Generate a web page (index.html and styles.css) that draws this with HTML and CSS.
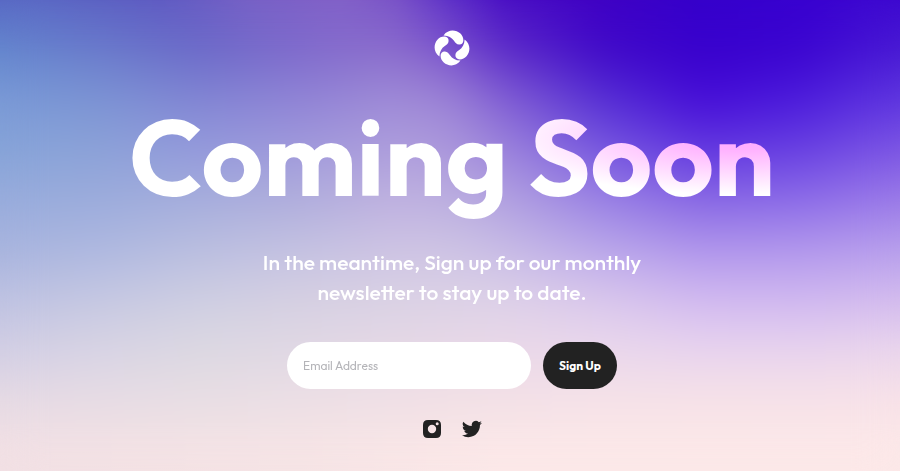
FILE: index.html
```html
<!DOCTYPE html>
<html lang="en">
<head>
<meta charset="utf-8">
<meta name="viewport" content="width=device-width, initial-scale=1">
<title>Coming Soon</title>
<link rel="stylesheet" href="styles.css">
</head>
<body>
<div class="mesh" aria-hidden="true">
  <div class="band band-0"></div>
  <div class="band band-1"></div>
  <div class="band band-2"></div>
  <div class="band band-3"></div>
  <div class="band band-4"></div>
  <div class="band band-5"></div>
  <div class="band band-6"></div>
  <div class="band band-7"></div>
  <div class="band band-8"></div>
  <div class="band band-9"></div>
</div>
<main class="page">
  <a class="logo" href="#" aria-label="Home">
    <svg viewBox="0 0 36 36" width="36" height="36" fill="currentColor">
      <path id="petal" d="M9.500 5.400C12 2 15.500 .600 18.500 .600C24.500 .600 29.400 5 29.400 10.200C29.400 13 27.600 14.800 25.100 14.600C22.400 14.400 21.400 12.800 20 10.800C17.800 7.600 14.600 5.600 9.500 5.400Z"/>
      <use href="#petal" transform="rotate(90 18 18)"/>
      <use href="#petal" transform="rotate(180 18 18)"/>
      <use href="#petal" transform="rotate(270 18 18)"/>
    </svg>
  </a>
  <h1 class="title">Coming Soon</h1>
  <p class="lead">In the meantime, Sign up for our monthly newsletter to stay up to date.</p>
  <form class="signup">
    <input class="email" type="email" placeholder="Email Address" aria-label="Email Address">
    <button class="submit" type="submit">Sign Up</button>
  </form>
  <nav class="social">
    <a href="#" aria-label="Instagram">
      <svg viewBox="0 0 20 20" width="20" height="20" fill="currentColor"><path fill-rule="evenodd" d="M6 1H14Q19 1 19 6V14Q19 19 14 19H6Q1 19 1 14V6Q1 1 6 1ZM10 5.800A4.200 4.200 0 1 0 10 14.200A4.200 4.200 0 1 0 10 5.800ZM15.200 3.300A1.500 1.500 0 1 0 15.200 6.300A1.500 1.500 0 1 0 15.200 3.300Z"/></svg>
    </a>
    <a href="#" aria-label="Twitter">
      <svg viewBox="0 0 24 24" width="20" height="20" fill="currentColor"><path d="M23.950 4.570a10 10 0 0 1-2.820.770 4.960 4.960 0 0 0 2.160-2.720c-.950.560-2 .960-3.130 1.180a4.920 4.920 0 0 0-8.380 4.480C7.690 8.090 4.070 6.130 1.640 3.160a4.920 4.920 0 0 0 1.520 6.570 4.900 4.900 0 0 1-2.230-.620v.060a4.920 4.920 0 0 0 3.950 4.830 5 5 0 0 1-2.210.080 4.940 4.940 0 0 0 4.600 3.420A9.870 9.870 0 0 1 0 19.540a13.990 13.990 0 0 0 7.560 2.210c9.050 0 14-7.500 14-13.980 0-.210 0-.420-.020-.630a9.940 9.940 0 0 0 2.410-2.570z"/></svg>
    </a>
  </nav>
</main>
</body>
</html>
```
FILE: styles.css
```css
* {
  box-sizing: border-box;
}

body {
  margin: 0;
  position: relative;
  font-family: Outfit, Lato, sans-serif;
  background: #fce8e8;
  color: #fff;
}

/* Mesh background: every band is a horizontal gradient that fades in over the one above it. */
.mesh,
.mesh::after,
.band {
  position: absolute;
  inset: 0;
}

.mesh::after {
  content: "";
  backdrop-filter: blur(20px);
}

.band {
  --step: 10.6%;
  background: linear-gradient(90deg, var(--colors));
  mask-image: linear-gradient(180deg, transparent calc(var(--step) * (var(--n) - 1)), #000 calc(var(--step) * var(--n)));
}

.band-0 { --n: 0; --colors: #5868c4, #5a5ec2 11%, #5e58c2 18%, #7860c6 28%, #8260c8 38%, #7850c8 44%, #5a2cc8 50%, #480cc4 56%, #3f00c4 67%, #3500cc 78%, #3800d0 89%, #3d08d0; mask-image: none; }
.band-1 { --n: 1; --colors: #6488ce, #6a7ccc 11%, #6a6ac8 22%, #7e6acc 33%, #8c6ecc 44%, #7c54cc 50%, #5c2cc8 56%, #4008c8 67%, #3800cc 78%, #3b04d0 89%, #4a1cd4; }
.band-2 { --n: 2; --colors: #7a9ad6, #7c94d4 11%, #8286d4 22%, #9084d6 33%, #a08cd8 44%, #9c84d6 50%, #8260d4 56%, #5630d4 67%, #460cd8 78%, #4c1cdc 89%, #6038e0; }
.band-3 { --n: 3; --colors: #86a4d8, #8ca2d8 11%, #949adc 22%, #a09adc 33%, #ae9edc 44%, #ac98dc 50%, #9c84dc 56%, #7858e0 67%, #6238e0 78%, #6840e2 89%, #7e58e4; }
.band-4 { --n: 4; --colors: #98acdc, #9cacdc 11%, #a6aedc 22%, #b0aedc 33%, #c0b2e0 44%, #bcb0e0 50%, #b2a2e0 56%, #9a82e4 67%, #8868e4 78%, #8c6ce8 89%, #9c7ce8; }
.band-5 { --n: 5; --colors: #a8b4de, #aeb8e0 11%, #babee0 22%, #c4c2e2 33%, #cec4e4 44%, #cec4e4 50%, #c8bce6 56%, #baa8ea 67%, #b096ec 78%, #b298ec 89%, #b8a0ec; }
.band-6 { --n: 6; --colors: #bec2e2, #c6c8e2 11%, #cecee2 22%, #d6d0e2 33%, #dad2e4 44%, #ded2e8 56%, #dac8ec 67%, #d2baf0 78%, #d0b8f0 89%, #d4bcee; }
.band-7 { --n: 7; --colors: #d2cee4, #d8d4e4 11%, #dcd8e2 22%, #e0d8e4 33%, #e6d8e6 44%, #ead8e8 56%, #ead8ec 67%, #e8d4ee 78%, #e8d4ee 89%, #ead6ec; }
.band-8 { --n: 8; --colors: #e6dae4, #e8dee4 22%, #f0e0e6 44%, #f6e2e7 67%, #f8e2e8; }
.band-9 { --n: 9; --colors: #f2e0e4, #f6e4e5 33%, #fce8e8 56%, #fce8e8; }

.page {
  position: relative;
  display: flex;
  flex-direction: column;
  align-items: center;
  min-height: 100vh;
  padding: 30px 20px 0 24px;
  border-bottom: 1px solid #fff;
}

.logo {
  display: flex;
  color: #fff;
}

.title {
  margin: 19px 0 0;
  font-size: 107px;
  line-height: 144px;
  font-weight: 700;
  white-space: nowrap;
  color: transparent;
  background: radial-gradient(ellipse 38% 40% at 95% 36%, #ffa8ff, #ffb4ff 25%, #fff) #fff;
  background-clip: text;
}

.lead {
  margin: 18px 0 0;
  max-width: 400px;
  font-size: 21px;
  line-height: 30px;
  font-weight: 500;
  text-align: center;
}

.signup {
  display: flex;
  gap: 12px;
  margin: 35px 0 0;
}

.email,
.submit {
  height: 47px;
  border: 0;
  border-radius: 24px;
  font-family: inherit;
  font-size: 12px;
}

.email {
  width: 244px;
  padding: 0 16px;
  background: #fff;
  color: #222;
}

.email::placeholder {
  color: #b4b4b8;
}

.submit {
  padding: 0 16px;
  background: #222;
  color: #fff;
  font-weight: 700;
}

.social {
  display: flex;
  gap: 20px;
  margin: 30px 0 0;
}

.social a {
  display: flex;
  color: #222;
}
```
